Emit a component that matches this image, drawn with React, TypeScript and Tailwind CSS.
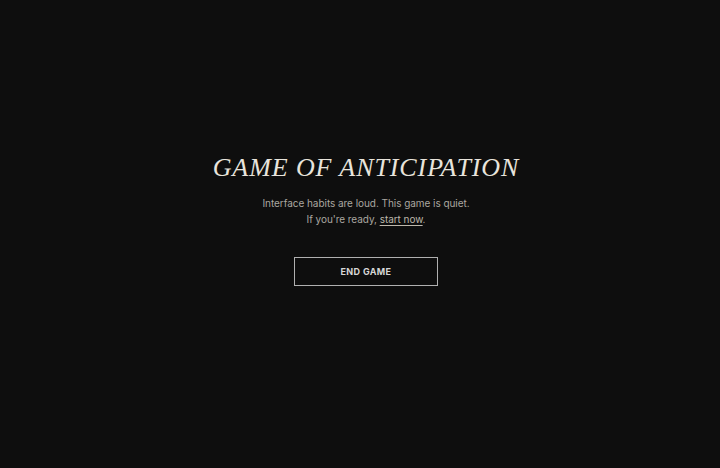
export default function App() {
  return (
    <div className="min-h-[468px] w-full bg-[#0e0e0e] flex flex-col items-center pt-[151px] pl-[12px]">
      <h1 className="font-['Liberation_Serif',serif] italic text-[26px] leading-[34px] tracking-[0.035em] text-[#e8e4dc]">
        GAME OF ANTICIPATION
      </h1>
      <p className="mt-[10px] font-['Inter',sans-serif] text-[10px] leading-[16px] tracking-[-0.005em] text-[#aaa7a0] text-center">
        Interface habits are loud. This game is quiet.
        <br />
        If you're ready,{" "}
        <a href="#" className="underline underline-offset-2 text-[#bdb7ab]">
          start now
        </a>
        .
      </p>
      <button className="mt-[30px] w-[144px] h-[29px] border border-[#b0b0b0] font-['Inter',sans-serif] text-[9px] font-bold tracking-[0.04em] text-[#d6d6d6]">
        END GAME
      </button>
    </div>
  );
}
